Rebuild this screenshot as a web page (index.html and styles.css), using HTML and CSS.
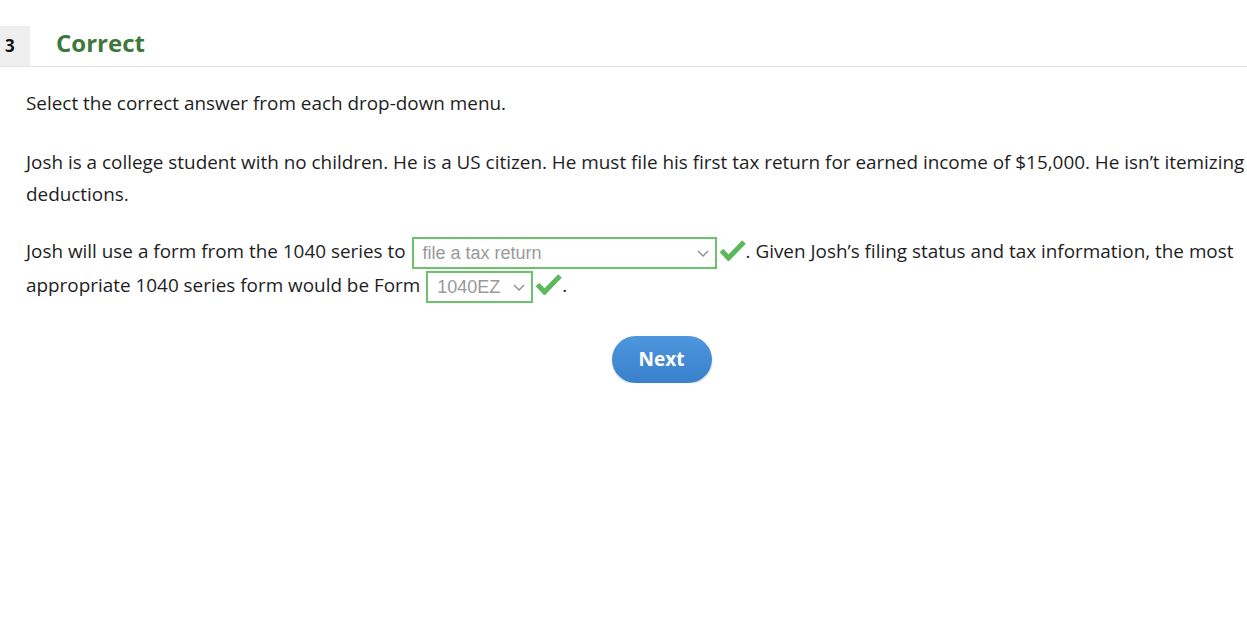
FILE: index.html
```html
<!DOCTYPE html>
<html>
<head>
<meta charset="utf-8">
<link rel="stylesheet" href="styles.css">
</head>
<body>
<div class="header">
  <div class="num">3</div>
  <h1 class="status">Correct</h1>
</div>
<div class="content">
  <p class="instr">Select the correct answer from each drop-down menu.</p>
  <p class="para">Josh is a college student with no children. He is a US citizen. He must file his first tax return for earned income of $15,000. He isn’t itemizing deductions.</p>
  <p class="para q">Josh will use a form from the 1040 series to <span class="sel wide">file a tax return<svg class="chev" viewBox="0 0 12 7" width="12" height="7"><path d="M1 1l5 5 5-5" fill="none" stroke="#8a8a8a" stroke-width="1.3"/></svg></span><svg class="check" viewBox="0 0 27 21" width="27" height="21"><path d="M2.5 10.5l7 7.5L25 2" fill="none" stroke="#5cb85c" stroke-width="5"/></svg>. Given Josh’s filing status and tax information, the most appropriate 1040 series form would be Form <span class="sel narrow">1040EZ<svg class="chev" viewBox="0 0 12 7" width="12" height="7"><path d="M1 1l5 5 5-5" fill="none" stroke="#8a8a8a" stroke-width="1.3"/></svg></span><svg class="check" viewBox="0 0 27 21" width="27" height="21"><path d="M2.5 10.5l7 7.5L25 2" fill="none" stroke="#5cb85c" stroke-width="5"/></svg>.</p>
  <div class="actions"><button class="next">Next</button></div>
</div>
</body>
</html>
```
FILE: styles.css
```css
html, body { margin: 0; padding: 0; background: #fff; }
body { font-family: "Open Sans", "Liberation Sans", sans-serif; color: #1e1e1e; }
.header {
  margin-top: 26px;
  display: flex;
  align-items: center;
  height: 40px;
  border-bottom: 1px solid #e2e2e2;
}
.num {
  width: 30px;
  height: 40px;
  background: #efefef;
  font-weight: 700;
  font-size: 17px;
  line-height: 40px;
  text-indent: 5px;
  color: #111;
}
.status {
  margin: -6px 0 0 26px;
  font-size: 24px;
  font-weight: 700;
  color: #3d773d;
  line-height: 34px;
}
.content { padding: 0 0 0 26px; }
.instr { margin: 23px 0 0; font-size: 18.9px; line-height: 26px; }
.para { margin: 30px 0 0; font-size: 18.9px; line-height: 32px; }
.q { line-height: 33px; margin-top: 25px; }
.sel {
  display: inline-flex;
  align-items: center;
  justify-content: space-between;
  box-sizing: border-box;
  height: 32px;
  border: 2px solid #6ac46a;
  font-family: Arial, "Liberation Sans", sans-serif;
  font-size: 18px;
  color: #999;
  padding: 1px 6px 0 9px;
  vertical-align: middle;
  margin-top: 0;
  margin-left: 1px;
}
.wide { width: 305px; }
.narrow { width: 107px; }
.chev { margin-left: 10px; }
.check { vertical-align: middle; margin: -4px 0 0 2px; }
.actions { display: flex; justify-content: center; margin-top: 33px; padding-left: 50px; }
.next {
  width: 100px;
  height: 47px;
  border: none;
  border-radius: 24px;
  background: linear-gradient(#4d97de, #3a80cc);
  color: #fff;
  font-family: "Open Sans", sans-serif;
  font-weight: 700;
  font-size: 19px;
  box-shadow: 0 1px 2px rgba(0,0,0,0.2);
}
```
